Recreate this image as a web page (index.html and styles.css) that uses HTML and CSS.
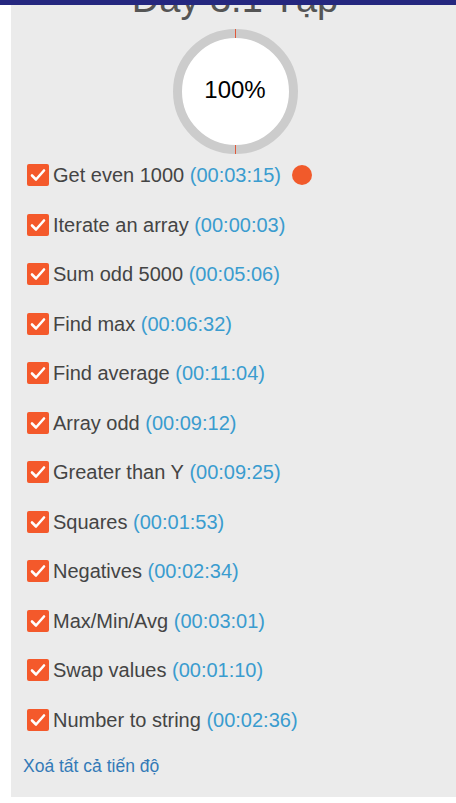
FILE: index.html
```html
<!DOCTYPE html>
<html lang="vi">
<head>
<meta charset="utf-8">
<title>Day 3.1 Tập</title>
<link rel="stylesheet" href="styles.css">
</head>
<body>
<div class="topbar"></div>
<main class="panel">
  <h1 class="title">Day 3.1 Tập</h1>
  <div class="progress">
    <div class="ring">
      <span class="tick tick-top"></span>
      <span class="tick tick-bottom"></span>
      <div class="inner">100%</div>
    </div>
  </div>
  <ul class="tasks">
    <li class="task"><span class="box"><svg viewBox="0 0 22 22"><path d="M5 11.5 L9 15.5 L17 6.5"/></svg></span><span class="name">Get even 1000</span>&nbsp;<span class="time">(00:03:15)</span><span class="dot"></span></li>
    <li class="task"><span class="box"><svg viewBox="0 0 22 22"><path d="M5 11.5 L9 15.5 L17 6.5"/></svg></span><span class="name">Iterate an array</span>&nbsp;<span class="time">(00:00:03)</span></li>
    <li class="task"><span class="box"><svg viewBox="0 0 22 22"><path d="M5 11.5 L9 15.5 L17 6.5"/></svg></span><span class="name">Sum odd 5000</span>&nbsp;<span class="time">(00:05:06)</span></li>
    <li class="task"><span class="box"><svg viewBox="0 0 22 22"><path d="M5 11.5 L9 15.5 L17 6.5"/></svg></span><span class="name">Find max</span>&nbsp;<span class="time">(00:06:32)</span></li>
    <li class="task"><span class="box"><svg viewBox="0 0 22 22"><path d="M5 11.5 L9 15.5 L17 6.5"/></svg></span><span class="name">Find average</span>&nbsp;<span class="time">(00:11:04)</span></li>
    <li class="task"><span class="box"><svg viewBox="0 0 22 22"><path d="M5 11.5 L9 15.5 L17 6.5"/></svg></span><span class="name">Array odd</span>&nbsp;<span class="time">(00:09:12)</span></li>
    <li class="task"><span class="box"><svg viewBox="0 0 22 22"><path d="M5 11.5 L9 15.5 L17 6.5"/></svg></span><span class="name">Greater than Y</span>&nbsp;<span class="time">(00:09:25)</span></li>
    <li class="task"><span class="box"><svg viewBox="0 0 22 22"><path d="M5 11.5 L9 15.5 L17 6.5"/></svg></span><span class="name">Squares</span>&nbsp;<span class="time">(00:01:53)</span></li>
    <li class="task"><span class="box"><svg viewBox="0 0 22 22"><path d="M5 11.5 L9 15.5 L17 6.5"/></svg></span><span class="name">Negatives</span>&nbsp;<span class="time">(00:02:34)</span></li>
    <li class="task"><span class="box"><svg viewBox="0 0 22 22"><path d="M5 11.5 L9 15.5 L17 6.5"/></svg></span><span class="name">Max/Min/Avg</span>&nbsp;<span class="time">(00:03:01)</span></li>
    <li class="task"><span class="box"><svg viewBox="0 0 22 22"><path d="M5 11.5 L9 15.5 L17 6.5"/></svg></span><span class="name">Swap values</span>&nbsp;<span class="time">(00:01:10)</span></li>
    <li class="task"><span class="box"><svg viewBox="0 0 22 22"><path d="M5 11.5 L9 15.5 L17 6.5"/></svg></span><span class="name">Number to string</span>&nbsp;<span class="time">(00:02:36)</span></li>
  </ul>
  <a class="reset" href="#">Xoá tất cả tiến độ</a>
</main>
</body>
</html>
```
FILE: styles.css
```css
html {
  overflow: hidden;
}
body {
  margin: 0;
  background: #ffffff;
  font-family: "Liberation Sans", Arial, sans-serif;
}
.topbar {
  position: fixed;
  top: 0;
  left: 0;
  right: 0;
  height: 5px;
  background: #25277f;
  z-index: 10;
}
.panel {
  display: block;
  margin: 0 -3px 0 11px;
  background: #ebebeb;
  padding: 0 12px 21px 12px;
}
.title {
  margin: -20.5px 0 0 0;
  font-size: 38px;
  line-height: 38px;
  font-weight: normal;
  color: #555555;
  text-align: center;
  white-space: nowrap;
}
.progress {
  display: flex;
  justify-content: center;
  margin-top: 11.5px;
}
.ring {
  position: relative;
  width: 125px;
  height: 125px;
  box-sizing: border-box;
  border-radius: 50%;
  border: 9px solid #cccccc;
  background: #ffffff;
  display: flex;
  align-items: center;
  justify-content: center;
}
.tick {
  position: absolute;
  left: 50%;
  width: 1px;
  height: 9px;
  margin-left: -0.5px;
  background: #e0593a;
}
.tick-top {
  top: -9px;
}
.tick-bottom {
  bottom: -9px;
}
.inner {
  font-size: 24px;
  color: #000000;
  margin-top: -3px;
}
.tasks {
  list-style: none;
  margin: 10px 0 0 0;
  padding: 0 0 0 4px;
}
.task {
  display: flex;
  align-items: center;
  height: 22px;
  margin-bottom: 27.55px;
  font-size: 20px;
  line-height: 22px;
  white-space: nowrap;
}
.task:last-child {
  margin-bottom: 0;
}
.box {
  width: 22px;
  height: 22px;
  flex: none;
  border-radius: 2px;
  background: #f4592b;
  margin-right: 4px;
  display: flex;
}
.box svg {
  width: 22px;
  height: 22px;
}
.box path {
  fill: none;
  stroke: #ffffff;
  stroke-width: 2.6;
  stroke-linecap: round;
  stroke-linejoin: round;
}
.name {
  color: #444444;
}
.time {
  color: #3a9ccf;
}
.dot {
  width: 20px;
  height: 20px;
  border-radius: 50%;
  background: #f15a2b;
  margin-left: 11px;
  flex: none;
}
.reset {
  display: block;
  margin-top: 25px;
  font-size: 17.5px;
  line-height: 20px;
  color: #337ab7;
  text-decoration: none;
}
```
